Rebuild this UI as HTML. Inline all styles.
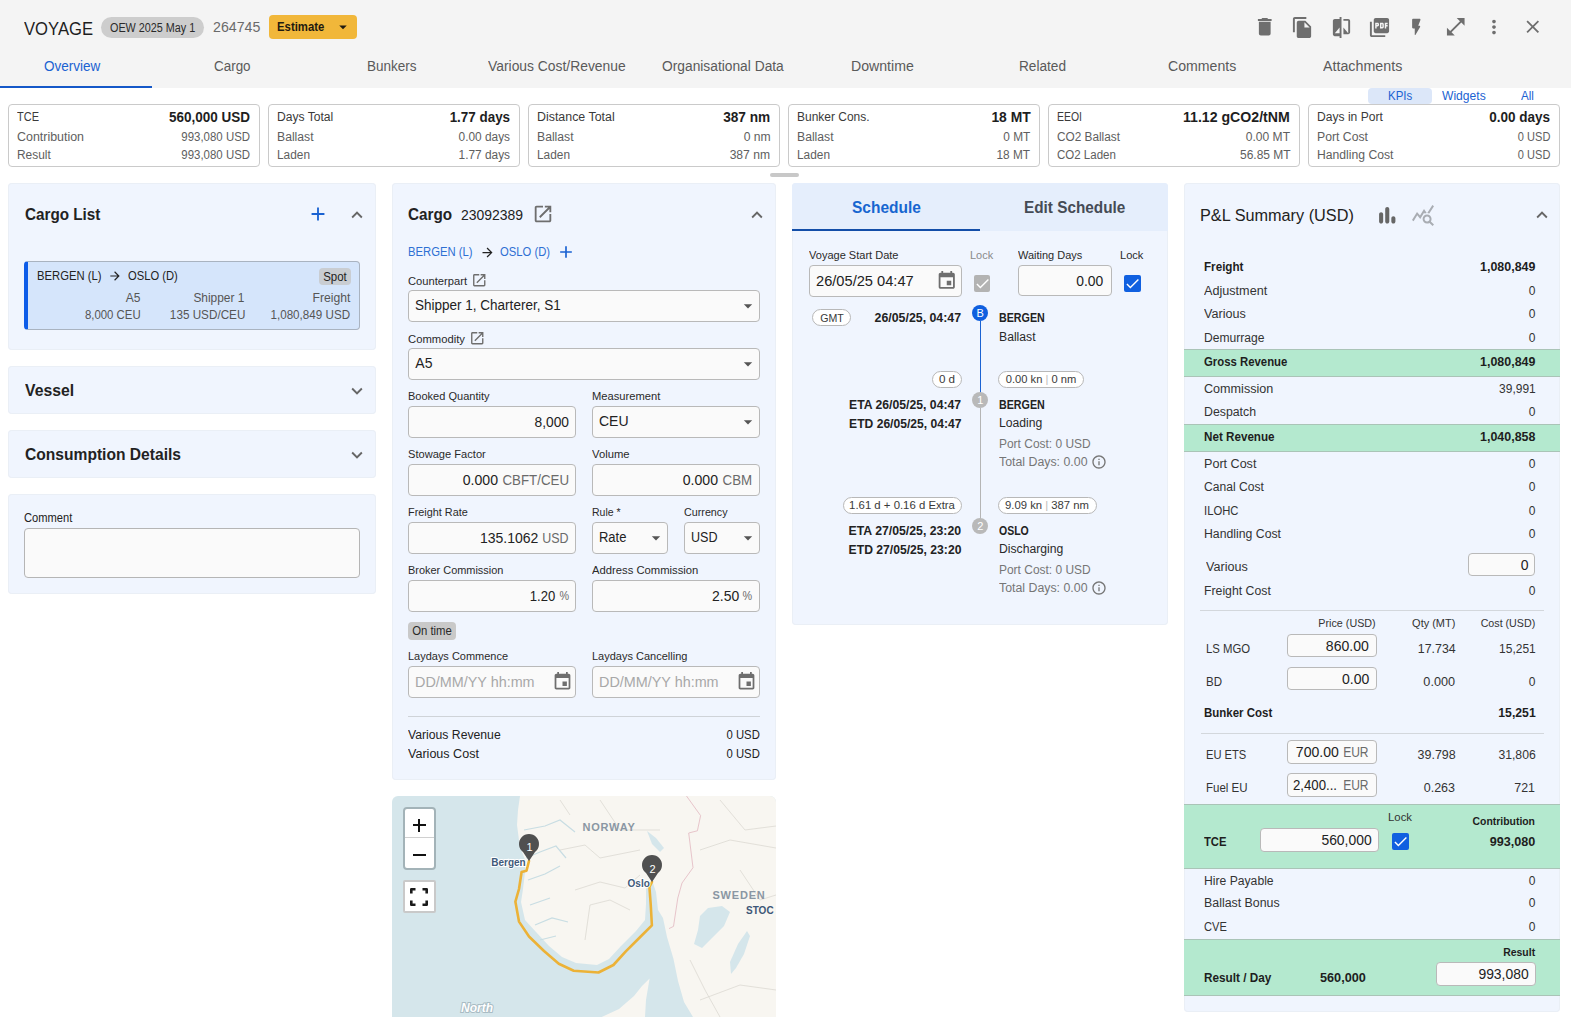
<!DOCTYPE html><html><head><meta charset="utf-8"><style>
*{margin:0;padding:0;box-sizing:border-box}
html,body{width:1571px;height:1017px;overflow:hidden;background:#fff;font-family:"Liberation Sans", sans-serif;position:relative}
.b{position:absolute}
.t{position:absolute;white-space:nowrap}
#t1{transform:scaleX(0.9237)}
#t2{transform:scaleX(0.9006)}
#t3{transform:scaleX(1.0124)}
#t4{transform:scaleX(0.8726)}
#t5{transform:scaleX(0.9647)}
#t6{transform:scaleX(0.9596)}
#t7{transform:scaleX(0.9657)}
#t8{transform:scaleX(0.9903)}
#t9{transform:scaleX(0.9842)}
#t10{transform:scaleX(1.0088)}
#t11{transform:scaleX(0.9738)}
#t12{transform:scaleX(1.0076)}
#t13{transform:scaleX(1.0189)}
#t14{transform:scaleX(0.9549)}
#t15{transform:scaleX(1.0079)}
#t16{transform:scaleX(0.9667)}
#t17{transform:scaleX(0.8800)}
#t18{transform:scaleX(0.9636)}
#t19{transform:scaleX(1.0352)}
#t20{transform:scaleX(0.9535)}
#t21{transform:scaleX(0.9937)}
#t22{transform:scaleX(0.9535)}
#t23{transform:scaleX(0.9683)}
#t24{transform:scaleX(0.9578)}
#t25{transform:scaleX(1.0158)}
#t26{transform:scaleX(0.9895)}
#t27{transform:scaleX(0.9888)}
#t28{transform:scaleX(0.9895)}
#t29{transform:scaleX(0.9924)}
#t30{transform:scaleX(0.9762)}
#t31{transform:scaleX(1.0158)}
#t32{transform:scaleX(1.0117)}
#t33{transform:scaleX(0.9888)}
#t34{transform:scaleX(1.0092)}
#t35{transform:scaleX(0.9573)}
#t36{transform:scaleX(0.9902)}
#t37{transform:scaleX(1.0158)}
#t38{transform:scaleX(0.9874)}
#t39{transform:scaleX(0.9888)}
#t40{transform:scaleX(0.9848)}
#t41{transform:scaleX(0.8335)}
#t42{transform:scaleX(1.0101)}
#t43{transform:scaleX(0.9839)}
#t44{transform:scaleX(1.0042)}
#t45{transform:scaleX(0.9594)}
#t46{transform:scaleX(0.9999)}
#t47{transform:scaleX(0.9663)}
#t48{transform:scaleX(0.9641)}
#t49{transform:scaleX(1.0197)}
#t50{transform:scaleX(0.9195)}
#t51{transform:scaleX(1.0149)}
#t52{transform:scaleX(0.9195)}
#t53{transform:scaleX(0.9517)}
#t54{transform:scaleX(0.8655)}
#t55{transform:scaleX(0.8616)}
#t56{transform:scaleX(0.9559)}
#t58{transform:scaleX(0.9505)}
#t59{transform:scaleX(0.9927)}
#t60{transform:scaleX(0.9758)}
#t61{transform:scaleX(1.0145)}
#t62{transform:scaleX(0.9700)}
#t63{transform:scaleX(0.9834)}
#t64{transform:scaleX(0.9749)}
#t65{transform:scaleX(0.9286)}
#t66{transform:scaleX(0.9517)}
#t67{transform:scaleX(0.9968)}
#t68{transform:scaleX(0.9015)}
#t69{transform:scaleX(0.8999)}
#t70{transform:scaleX(0.9714)}
#t71{transform:scaleX(0.9650)}
#t72{transform:scaleX(0.9784)}
#t74{transform:scaleX(0.9585)}
#t75{transform:scaleX(0.9714)}
#t76{transform:scaleX(0.9844)}
#t78{transform:scaleX(0.9659)}
#t79{transform:scaleX(0.9776)}
#t80{transform:scaleX(1.0072)}
#t81{transform:scaleX(0.9500)}
#t82{transform:scaleX(1.0072)}
#t83{transform:scaleX(0.9510)}
#t84{transform:scaleX(0.9450)}
#t85{transform:scaleX(0.9129)}
#t86{transform:scaleX(0.9345)}
#t87{transform:scaleX(0.9999)}
#t88{transform:scaleX(0.8896)}
#t89{transform:scaleX(0.9264)}
#t90{transform:scaleX(0.8964)}
#t91{transform:scaleX(0.9509)}
#t92{transform:scaleX(0.9783)}
#t93{transform:scaleX(0.9358)}
#t94{transform:scaleX(0.8629)}
#t95{transform:scaleX(0.9982)}
#t96{transform:scaleX(0.8629)}
#t97{transform:scaleX(0.9449)}
#t98{transform:scaleX(0.9539)}
#t99{transform:scaleX(0.9565)}
#t100{transform:scaleX(1.0272)}
#t101{transform:scaleX(1.0272)}
#t102{transform:scaleX(0.9761)}
#t103{transform:scaleX(1.0037)}
#t104{transform:scaleX(0.9042)}
#t105{transform:scaleX(0.9042)}
#t106{transform:scaleX(0.9671)}
#t107{transform:scaleX(0.9584)}
#t108{transform:scaleX(0.9588)}
#t109{transform:scaleX(0.9549)}
#t110{transform:scaleX(0.9550)}
#t111{transform:scaleX(0.9631)}
#t112{transform:scaleX(1.0458)}
#t113{transform:scaleX(0.9908)}
#t114{transform:scaleX(0.9232)}
#t115{transform:scaleX(1.0288)}
#t117{transform:scaleX(0.8920)}
#t118{transform:scaleX(1.0158)}
#t119{transform:scaleX(1.0125)}
#t120{transform:scaleX(0.9699)}
#t122{transform:scaleX(1.0175)}
#t123{transform:scaleX(1.0080)}
#t124{transform:scaleX(0.8920)}
#t125{transform:scaleX(1.0136)}
#t126{transform:scaleX(0.9964)}
#t127{transform:scaleX(1.0285)}
#t128{transform:scaleX(0.9879)}
#t129{transform:scaleX(0.9826)}
#t131{transform:scaleX(1.0220)}
#t132{transform:scaleX(1.0125)}
#t133{transform:scaleX(0.8761)}
#t134{transform:scaleX(1.0146)}
#t135{transform:scaleX(0.9964)}
#t136{transform:scaleX(1.0285)}
#t137{transform:scaleX(1.0156)}
#t138{transform:scaleX(0.9712)}
#t139{transform:scaleX(1.0358)}
#t140{transform:scaleX(1.0528)}
#t142{transform:scaleX(1.0478)}
#t144{transform:scaleX(1.0078)}
#t146{transform:scaleX(0.9472)}
#t147{transform:scaleX(1.0358)}
#t148{transform:scaleX(1.0498)}
#t149{transform:scaleX(0.9972)}
#t150{transform:scaleX(1.0256)}
#t152{transform:scaleX(0.9711)}
#t153{transform:scaleX(1.0358)}
#t154{transform:scaleX(1.0477)}
#t156{transform:scaleX(1.0072)}
#t158{transform:scaleX(0.9376)}
#t160{transform:scaleX(1.0216)}
#t162{transform:scaleX(1.0478)}
#t164{transform:scaleX(1.0220)}
#t166{transform:scaleX(0.9766)}
#t167{transform:scaleX(0.9979)}
#t168{transform:scaleX(0.9709)}
#t169{transform:scaleX(0.9467)}
#t170{transform:scaleX(1.0040)}
#t171{transform:scaleX(1.0326)}
#t172{transform:scaleX(0.9972)}
#t173{transform:scaleX(0.9597)}
#t174{transform:scaleX(1.0018)}
#t175{transform:scaleX(1.0556)}
#t177{transform:scaleX(0.9573)}
#t178{transform:scaleX(1.0190)}
#t179{transform:scaleX(0.9298)}
#t180{transform:scaleX(1.0040)}
#t181{transform:scaleX(0.8592)}
#t182{transform:scaleX(1.0381)}
#t183{transform:scaleX(1.0163)}
#t184{transform:scaleX(0.9594)}
#t185{transform:scaleX(0.9421)}
#t186{transform:scaleX(0.8592)}
#t187{transform:scaleX(1.0422)}
#t188{transform:scaleX(1.0334)}
#t189{transform:scaleX(0.9375)}
#t190{transform:scaleX(0.9919)}
#t191{transform:scaleX(0.9878)}
#t192{transform:scaleX(0.9046)}
#t193{transform:scaleX(1.0509)}
#t194{transform:scaleX(1.0131)}
#t196{transform:scaleX(1.0315)}
#t198{transform:scaleX(0.9235)}
#t200{transform:scaleX(0.9102)}
#t201{transform:scaleX(0.9796)}
#t202{transform:scaleX(1.0578)}
#t203{transform:scaleX(0.9919)}</style></head><body>
<div class="b" style="left:0px;top:0px;width:1571px;height:88px;background:#f4f4f4"></div>
<div class="t" id="t1" style="left:24px;top:18.5px;font-size:18px;line-height:20px;color:#1e1e1e;transform-origin:left;">VOYAGE</div>
<div class="b" style="left:101px;top:17px;width:103px;height:21px;background:#cdcdcd;border-radius:11px"></div>
<div class="t" id="t2" style="left:109.5px;top:17.5px;font-size:12px;line-height:20px;color:#2a2a2a;transform-origin:left;">OEW 2025 May 1</div>
<div class="t" id="t3" style="left:212.5px;top:17.0px;font-size:14px;line-height:20px;color:#6a6a6a;transform-origin:left;">264745</div>
<div class="b" style="left:269px;top:15px;width:88px;height:24px;background:#f1b73a;border-radius:4px"></div>
<div class="t" id="t4" style="left:276.7px;top:17.0px;font-size:13px;line-height:20px;color:#1f1a10;font-weight:700;transform-origin:left;">Estimate</div>
<svg class="b" style="left:334.0px;top:18.0px;" width="18" height="18" viewBox="0 0 24 24"><path fill="#1f1a10" d="M7 10l5 5 5-5z"/></svg>
<svg class="b" style="left:1252.75px;top:15.25px;" width="23.5" height="23.5" viewBox="0 0 24 24"><path fill="#6e6e6e" d="M6 19c0 1.1.9 2 2 2h8c1.1 0 2-.9 2-2V7H6v12zM19 4h-3.5l-1-1h-5l-1 1H5v2h14V4z"/></svg>
<svg class="b" style="left:1290.5px;top:15.5px;" width="23" height="23" viewBox="0 0 24 24"><path fill="#6e6e6e" d="M16 1H4c-1.1 0-2 .9-2 2v14h2V3h12V1zm-1 4l6 6v10c0 1.1-.9 2-2 2H7.99C6.89 23 6 22.1 6 21l.01-14c0-1.1.89-2 1.99-2h7zm-1 7h5.5L14 6.5V12z"/></svg>
<svg class="b" style="left:1329.7px;top:15.5px;" width="23" height="23" viewBox="0 0 24 24"><path fill="#6e6e6e" d="M10 3H5c-1.11 0-2 .89-2 2v14c0 1.1.89 2 2 2h5v2h2V1h-2v2zm0 15H5l5-6v6zm9-15h-5v2h5v13l-5-6v7h5c1.1 0 2-.9 2-2V5c0-1.11-.9-2-2-2z"/></svg>
<svg class="b" style="left:1367.8px;top:15.5px;" width="23" height="23" viewBox="0 0 24 24"><path fill="#6e6e6e" d="M20 2H8c-1.1 0-2 .9-2 2v12c0 1.1.9 2 2 2h12c1.1 0 2-.9 2-2V4c0-1.1-.9-2-2-2zm-8.5 7.5c0 .83-.67 1.5-1.5 1.5H9v2H7.5V7H10c.83 0 1.5.67 1.5 1.5v1zm5 2c0 .83-.67 1.5-1.5 1.5h-2.5V7H15c.83 0 1.5.67 1.5 1.5v3zm4-3H19v1h1.5V11H19v2h-1.5V7h3v1.5zM9 9.5h1v-1H9v1zM4 6H2v14c0 1.1.9 2 2 2h14v-2H4V6zm10 5.5h1v-3h-1v3z"/></svg>
<svg class="b" style="left:1406.0px;top:16.5px;" width="21" height="21" viewBox="0 0 24 24"><path fill="#6e6e6e" d="M7 3v9c0 .55.45 1 1 1h2v7.15c0 .51.67.69.93.25l5.19-8.9c.39-.67-.09-1.5-.86-1.5H14l2.49-6.65c.25-.65-.23-1.35-.93-1.35H8c-.55 0-1 .45-1 1z"/></svg>
<svg class="b" style="left:1444.45px;top:15.25px;" width="23.5" height="23.5" viewBox="0 0 24 24"><path fill="#6e6e6e" d="M21 11V3h-8l3.29 3.29-10 10L3 13v8h8l-3.29-3.29 10-10z"/></svg>
<svg class="b" style="left:1483.0px;top:16.0px;" width="22" height="22" viewBox="0 0 24 24"><path fill="#6e6e6e" d="M12 8c1.1 0 2-.9 2-2s-.9-2-2-2-2 .9-2 2 .9 2 2 2zm0 2c-1.1 0-2 .9-2 2s.9 2 2 2 2-.9 2-2-.9-2-2-2zm0 6c-1.1 0-2 .9-2 2s.9 2 2 2 2-.9 2-2-.9-2-2-2z"/></svg>
<svg class="b" style="left:1522.45px;top:16.25px;" width="21.5" height="21.5" viewBox="0 0 24 24"><path fill="#6e6e6e" d="M19 6.41L17.59 5 12 10.59 6.41 5 5 6.41 10.59 12 5 17.59 6.41 19 12 13.41 17.59 19 19 17.59 13.41 12z"/></svg>
<div class="t" id="t5" style="left:44px;top:56.0px;font-size:14px;line-height:20px;color:#1a62d2;transform-origin:left;">Overview</div>
<div class="t" id="t6" style="left:213.9px;top:56.0px;font-size:14px;line-height:20px;color:#5a5a5a;transform-origin:left;">Cargo</div>
<div class="t" id="t7" style="left:367px;top:56.0px;font-size:14px;line-height:20px;color:#5a5a5a;transform-origin:left;">Bunkers</div>
<div class="t" id="t8" style="left:488.3px;top:56.0px;font-size:14px;line-height:20px;color:#5a5a5a;transform-origin:left;">Various Cost/Revenue</div>
<div class="t" id="t9" style="left:661.6px;top:56.0px;font-size:14px;line-height:20px;color:#5a5a5a;transform-origin:left;">Organisational Data</div>
<div class="t" id="t10" style="left:851px;top:56.0px;font-size:14px;line-height:20px;color:#5a5a5a;transform-origin:left;">Downtime</div>
<div class="t" id="t11" style="left:1019px;top:56.0px;font-size:14px;line-height:20px;color:#5a5a5a;transform-origin:left;">Related</div>
<div class="t" id="t12" style="left:1167.8px;top:56.0px;font-size:14px;line-height:20px;color:#5a5a5a;transform-origin:left;">Comments</div>
<div class="t" id="t13" style="left:1322.5px;top:56.0px;font-size:14px;line-height:20px;color:#5a5a5a;transform-origin:left;">Attachments</div>
<div class="b" style="left:0px;top:86px;width:152px;height:2px;background:#1558c8"></div>
<div class="b" style="left:1368px;top:88px;width:64px;height:15.5px;background:#dce7f9;border-radius:4px"></div>
<div class="t" id="t14" style="left:1387.7px;top:85.5px;font-size:12px;line-height:20px;color:#1a62d2;transform-origin:left;">KPIs</div>
<div class="t" id="t15" style="left:1442px;top:85.5px;font-size:12px;line-height:20px;color:#1a62d2;transform-origin:left;">Widgets</div>
<div class="t" id="t16" style="left:1521.3px;top:85.5px;font-size:12px;line-height:20px;color:#1a62d2;transform-origin:left;">All</div>
<div class="b" style="left:8px;top:104px;width:252px;height:62.5px;border:1px solid #cacaca;border-radius:4px"></div>
<div class="t" id="t17" style="left:17.3px;top:107.0px;font-size:12.5px;line-height:20px;color:#3a3a3a;transform-origin:left;">TCE</div>
<div class="t" id="t18" style="right:1320.8px;top:107.0px;font-size:14px;line-height:20px;color:#1e1e1e;font-weight:700;transform-origin:right;">560,000 USD</div>
<div class="t" id="t19" style="left:17.3px;top:127.0px;font-size:12px;line-height:20px;color:#5e5e5e;transform-origin:left;">Contribution</div>
<div class="t" id="t20" style="right:1320.8px;top:127.0px;font-size:12px;line-height:20px;color:#5e5e5e;transform-origin:right;">993,080 USD</div>
<div class="t" id="t21" style="left:17.3px;top:145.0px;font-size:12px;line-height:20px;color:#5e5e5e;transform-origin:left;">Result</div>
<div class="t" id="t22" style="right:1320.8px;top:145.0px;font-size:12px;line-height:20px;color:#5e5e5e;transform-origin:right;">993,080 USD</div>
<div class="b" style="left:268px;top:104px;width:252px;height:62.5px;border:1px solid #cacaca;border-radius:4px"></div>
<div class="t" id="t23" style="left:277.3px;top:107.0px;font-size:12.5px;line-height:20px;color:#3a3a3a;transform-origin:left;">Days Total</div>
<div class="t" id="t24" style="right:1060.8px;top:107.0px;font-size:14px;line-height:20px;color:#1e1e1e;font-weight:700;transform-origin:right;">1.77 days</div>
<div class="t" id="t25" style="left:277.3px;top:127.0px;font-size:12px;line-height:20px;color:#5e5e5e;transform-origin:left;">Ballast</div>
<div class="t" id="t26" style="right:1060.8px;top:127.0px;font-size:12px;line-height:20px;color:#5e5e5e;transform-origin:right;">0.00 days</div>
<div class="t" id="t27" style="left:277.3px;top:145.0px;font-size:12px;line-height:20px;color:#5e5e5e;transform-origin:left;">Laden</div>
<div class="t" id="t28" style="right:1060.8px;top:145.0px;font-size:12px;line-height:20px;color:#5e5e5e;transform-origin:right;">1.77 days</div>
<div class="b" style="left:528px;top:104px;width:252px;height:62.5px;border:1px solid #cacaca;border-radius:4px"></div>
<div class="t" id="t29" style="left:537.3px;top:107.0px;font-size:12.5px;line-height:20px;color:#3a3a3a;transform-origin:left;">Distance Total</div>
<div class="t" id="t30" style="right:800.8px;top:107.0px;font-size:14px;line-height:20px;color:#1e1e1e;font-weight:700;transform-origin:right;">387 nm</div>
<div class="t" id="t31" style="left:537.3px;top:127.0px;font-size:12px;line-height:20px;color:#5e5e5e;transform-origin:left;">Ballast</div>
<div class="t" id="t32" style="right:800.8px;top:127.0px;font-size:12px;line-height:20px;color:#5e5e5e;transform-origin:right;">0 nm</div>
<div class="t" id="t33" style="left:537.3px;top:145.0px;font-size:12px;line-height:20px;color:#5e5e5e;transform-origin:left;">Laden</div>
<div class="t" id="t34" style="right:800.8px;top:145.0px;font-size:12px;line-height:20px;color:#5e5e5e;transform-origin:right;">387 nm</div>
<div class="b" style="left:788px;top:104px;width:252px;height:62.5px;border:1px solid #cacaca;border-radius:4px"></div>
<div class="t" id="t35" style="left:797.3px;top:107.0px;font-size:12.5px;line-height:20px;color:#3a3a3a;transform-origin:left;">Bunker Cons.</div>
<div class="t" id="t36" style="right:540.8px;top:107.0px;font-size:14px;line-height:20px;color:#1e1e1e;font-weight:700;transform-origin:right;">18 MT</div>
<div class="t" id="t37" style="left:797.3px;top:127.0px;font-size:12px;line-height:20px;color:#5e5e5e;transform-origin:left;">Ballast</div>
<div class="t" id="t38" style="right:540.8px;top:127.0px;font-size:12px;line-height:20px;color:#5e5e5e;transform-origin:right;">0 MT</div>
<div class="t" id="t39" style="left:797.3px;top:145.0px;font-size:12px;line-height:20px;color:#5e5e5e;transform-origin:left;">Laden</div>
<div class="t" id="t40" style="right:540.8px;top:145.0px;font-size:12px;line-height:20px;color:#5e5e5e;transform-origin:right;">18 MT</div>
<div class="b" style="left:1048px;top:104px;width:252px;height:62.5px;border:1px solid #cacaca;border-radius:4px"></div>
<div class="t" id="t41" style="left:1057.3px;top:107.0px;font-size:12.5px;line-height:20px;color:#3a3a3a;transform-origin:left;">EEOI</div>
<div class="t" id="t42" style="right:280.79999999999995px;top:107.0px;font-size:14px;line-height:20px;color:#1e1e1e;font-weight:700;transform-origin:right;">11.12 gCO2/tNM</div>
<div class="t" id="t43" style="left:1057.3px;top:127.0px;font-size:12px;line-height:20px;color:#5e5e5e;transform-origin:left;">CO2 Ballast</div>
<div class="t" id="t44" style="right:280.79999999999995px;top:127.0px;font-size:12px;line-height:20px;color:#5e5e5e;transform-origin:right;">0.00 MT</div>
<div class="t" id="t45" style="left:1057.3px;top:145.0px;font-size:12px;line-height:20px;color:#5e5e5e;transform-origin:left;">CO2 Laden</div>
<div class="t" id="t46" style="right:280.79999999999995px;top:145.0px;font-size:12px;line-height:20px;color:#5e5e5e;transform-origin:right;">56.85 MT</div>
<div class="b" style="left:1308px;top:104px;width:252px;height:62.5px;border:1px solid #cacaca;border-radius:4px"></div>
<div class="t" id="t47" style="left:1317.3px;top:107.0px;font-size:12.5px;line-height:20px;color:#3a3a3a;transform-origin:left;">Days in Port</div>
<div class="t" id="t48" style="right:20.799999999999955px;top:107.0px;font-size:14px;line-height:20px;color:#1e1e1e;font-weight:700;transform-origin:right;">0.00 days</div>
<div class="t" id="t49" style="left:1317.3px;top:127.0px;font-size:12px;line-height:20px;color:#5e5e5e;transform-origin:left;">Port Cost</div>
<div class="t" id="t50" style="right:20.799999999999955px;top:127.0px;font-size:12px;line-height:20px;color:#5e5e5e;transform-origin:right;">0 USD</div>
<div class="t" id="t51" style="left:1317.3px;top:145.0px;font-size:12px;line-height:20px;color:#5e5e5e;transform-origin:left;">Handling Cost</div>
<div class="t" id="t52" style="right:20.799999999999955px;top:145.0px;font-size:12px;line-height:20px;color:#5e5e5e;transform-origin:right;">0 USD</div>
<div class="b" style="left:769.5px;top:173px;width:29.5px;height:4px;background:#c8c8c8;border-radius:2px"></div>
<div class="b" style="left:8px;top:183px;width:368px;height:166.5px;background:#f0f5fe;border-radius:4px;box-shadow:inset 0 0 0 1px #eaeff6;"></div>
<div class="t" id="t53" style="left:24.5px;top:205.2px;font-size:16px;line-height:20px;color:#222;font-weight:700;transform-origin:left;">Cargo List</div>
<svg class="b" style="left:307.3px;top:203.2px;" width="22" height="22" viewBox="0 0 24 24"><path fill="#1a62d2" d="M19 13h-6v6h-2v-6H5v-2h6V5h2v6h6v2z"/></svg>
<svg class="b" style="left:346.2px;top:203.8px;" width="22" height="22" viewBox="0 0 24 24"><path fill="#666" d="M12 8l-6 6 1.41 1.41L12 10.83l4.59 4.58L18 14z"/></svg>
<div class="b" style="left:24px;top:261px;width:336px;height:69px;background:#d5e5fb;border:1px solid #a9b3c0;border-left:4px solid #0d5ce8;border-radius:4px"></div>
<div class="t" id="t54" style="left:36.6px;top:265.5px;font-size:13px;line-height:20px;color:#222;transform-origin:left;">BERGEN (L)</div>
<svg class="b" style="left:108.2px;top:268.5px;" width="14" height="14" viewBox="0 0 24 24"><path fill="#222" d="M12 4l-1.41 1.41L16.17 11H4v2h12.17l-5.58 5.59L12 20l8-8z"/></svg>
<div class="t" id="t55" style="left:128.2px;top:265.5px;font-size:13px;line-height:20px;color:#222;transform-origin:left;">OSLO (D)</div>
<div class="b" style="left:319px;top:268.3px;width:31.5px;height:17.2px;background:#c9cdd2;border-radius:4px"></div>
<div class="t" id="t56" style="left:34.69999999999999px;width:600px;text-align:center;top:267.0px;font-size:12px;line-height:20px;color:#222;transform-origin:center;">Spot</div>
<div class="t" id="t57" style="right:1430.5px;top:287.5px;font-size:12px;line-height:20px;color:#555;transform-origin:right;">A5</div>
<div class="t" id="t58" style="right:1430.5px;top:304.5px;font-size:12px;line-height:20px;color:#555;transform-origin:right;">8,000 CEU</div>
<div class="t" id="t59" style="right:1326.3px;top:287.5px;font-size:12px;line-height:20px;color:#555;transform-origin:right;">Shipper 1</div>
<div class="t" id="t60" style="right:1325.7px;top:304.5px;font-size:12px;line-height:20px;color:#555;transform-origin:right;">135 USD/CEU</div>
<div class="t" id="t61" style="right:1220.7px;top:287.5px;font-size:12px;line-height:20px;color:#555;transform-origin:right;">Freight</div>
<div class="t" id="t62" style="right:1220.7px;top:304.5px;font-size:12px;line-height:20px;color:#555;transform-origin:right;">1,080,849 USD</div>
<div class="b" style="left:8px;top:366px;width:368px;height:47.5px;background:#f0f5fe;border-radius:4px;box-shadow:inset 0 0 0 1px #eaeff6;"></div>
<div class="t" id="t63" style="left:24.5px;top:381.0px;font-size:16px;line-height:20px;color:#222;font-weight:700;transform-origin:left;">Vessel</div>
<svg class="b" style="left:346.2px;top:379.5px;" width="22" height="22" viewBox="0 0 24 24"><path fill="#666" d="M16.59 8.59L12 13.17 7.41 8.59 6 10l6 6 6-6z"/></svg>
<div class="b" style="left:8px;top:430px;width:368px;height:47.5px;background:#f0f5fe;border-radius:4px;box-shadow:inset 0 0 0 1px #eaeff6;"></div>
<div class="t" id="t64" style="left:24.5px;top:444.5px;font-size:16px;line-height:20px;color:#222;font-weight:700;transform-origin:left;">Consumption Details</div>
<svg class="b" style="left:346.2px;top:443.5px;" width="22" height="22" viewBox="0 0 24 24"><path fill="#666" d="M16.59 8.59L12 13.17 7.41 8.59 6 10l6 6 6-6z"/></svg>
<div class="b" style="left:8px;top:494px;width:368px;height:99.5px;background:#f0f5fe;border-radius:4px;box-shadow:inset 0 0 0 1px #eaeff6;"></div>
<div class="t" id="t65" style="left:24.3px;top:508.0px;font-size:12px;line-height:20px;color:#222;transform-origin:left;">Comment</div>
<div class="b" style="left:24px;top:528px;width:336px;height:49.5px;background:#fafafa;border:1px solid #b5b5b5;border-radius:4px"></div>
<div class="b" style="left:392px;top:183px;width:384px;height:597px;background:#f0f5fe;border-radius:4px;box-shadow:inset 0 0 0 1px #eaeff6;"></div>
<div class="t" id="t66" style="left:408.4px;top:205.2px;font-size:16px;line-height:20px;color:#222;font-weight:700;transform-origin:left;">Cargo</div>
<div class="t" id="t67" style="left:461.2px;top:204.8px;font-size:14px;line-height:20px;color:#222;transform-origin:left;">23092389</div>
<svg class="b" style="left:532.3px;top:203.2px;" width="22" height="22" viewBox="0 0 24 24"><path fill="#6e6e6e" d="M19 19H5V5h7V3H5c-1.11 0-2 .9-2 2v14c0 1.1.89 2 2 2h14c1.1 0 2-.9 2-2v-7h-2v7zM14 3v2h3.59l-9.83 9.83 1.41 1.41L19 6.41V10h2V3h-7z"/></svg>
<svg class="b" style="left:745.8px;top:203.5px;" width="22" height="22" viewBox="0 0 24 24"><path fill="#666" d="M12 8l-6 6 1.41 1.41L12 10.83l4.59 4.58L18 14z"/></svg>
<div class="t" id="t68" style="left:408.4px;top:241.8px;font-size:12.5px;line-height:20px;color:#2e6fd3;transform-origin:left;">BERGEN (L)</div>
<svg class="b" style="left:479.5px;top:244.5px;" width="15" height="15" viewBox="0 0 24 24"><path fill="#222" d="M12 4l-1.41 1.41L16.17 11H4v2h12.17l-5.58 5.59L12 20l8-8z"/></svg>
<div class="t" id="t69" style="left:500px;top:241.8px;font-size:12.5px;line-height:20px;color:#2e6fd3;transform-origin:left;">OSLO (D)</div>
<svg class="b" style="left:556.3px;top:242.0px;" width="20" height="20" viewBox="0 0 24 24"><path fill="#1a62d2" d="M19 13h-6v6h-2v-6H5v-2h6V5h2v6h6v2z"/></svg>
<div class="t" id="t70" style="left:408.4px;top:271.0px;font-size:11.5px;line-height:20px;color:#2a2a2a;transform-origin:left;">Counterpart</div>
<svg class="b" style="left:471.35px;top:272.35px;" width="16.5" height="16.5" viewBox="0 0 24 24"><path fill="#6e6e6e" d="M19 19H5V5h7V3H5c-1.11 0-2 .9-2 2v14c0 1.1.89 2 2 2h14c1.1 0 2-.9 2-2v-7h-2v7zM14 3v2h3.59l-9.83 9.83 1.41 1.41L19 6.41V10h2V3h-7z"/></svg>
<div class="b" style="left:408px;top:290px;width:352px;height:32px;background:#fafafa;border:1px solid #b9b9b9;border-radius:4px;"></div>
<div class="t" id="t71" style="left:415.3px;top:295.0px;font-size:14px;line-height:20px;color:#222;transform-origin:left;">Shipper 1, Charterer, S1</div>
<svg class="b" style="left:737.5px;top:295.5px;" width="20" height="20" viewBox="0 0 24 24"><path fill="#555" d="M7 10l5 5 5-5z"/></svg>
<div class="t" id="t72" style="left:408.4px;top:329.0px;font-size:11.5px;line-height:20px;color:#2a2a2a;transform-origin:left;">Commodity</div>
<svg class="b" style="left:468.75px;top:330.25px;" width="16.5" height="16.5" viewBox="0 0 24 24"><path fill="#6e6e6e" d="M19 19H5V5h7V3H5c-1.11 0-2 .9-2 2v14c0 1.1.89 2 2 2h14c1.1 0 2-.9 2-2v-7h-2v7zM14 3v2h3.59l-9.83 9.83 1.41 1.41L19 6.41V10h2V3h-7z"/></svg>
<div class="b" style="left:408px;top:348px;width:352px;height:32px;background:#fafafa;border:1px solid #b9b9b9;border-radius:4px;"></div>
<div class="t" id="t73" style="left:415.3px;top:353.2px;font-size:14px;line-height:20px;color:#222;transform-origin:left;">A5</div>
<svg class="b" style="left:737.5px;top:353.5px;" width="20" height="20" viewBox="0 0 24 24"><path fill="#555" d="M7 10l5 5 5-5z"/></svg>
<div class="t" id="t74" style="left:408.4px;top:386.2px;font-size:11.5px;line-height:20px;color:#2a2a2a;transform-origin:left;">Booked Quantity</div>
<div class="t" id="t75" style="left:592px;top:386.2px;font-size:11.5px;line-height:20px;color:#2a2a2a;transform-origin:left;">Measurement</div>
<div class="b" style="left:408px;top:406px;width:168px;height:32px;background:#fafafa;border:1px solid #b9b9b9;border-radius:4px;"></div>
<div class="b" style="left:592px;top:406px;width:168px;height:32px;background:#fafafa;border:1px solid #b9b9b9;border-radius:4px;"></div>
<div class="t" id="t76" style="right:1002px;top:412.0px;font-size:14px;line-height:20px;color:#222;transform-origin:right;">8,000</div>
<div class="t" id="t77" style="left:599px;top:411.2px;font-size:14px;line-height:20px;color:#222;transform-origin:left;">CEU</div>
<svg class="b" style="left:737.5px;top:411.7px;" width="20" height="20" viewBox="0 0 24 24"><path fill="#555" d="M7 10l5 5 5-5z"/></svg>
<div class="t" id="t78" style="left:408.4px;top:444.2px;font-size:11.5px;line-height:20px;color:#2a2a2a;transform-origin:left;">Stowage Factor</div>
<div class="t" id="t79" style="left:592px;top:444.2px;font-size:11.5px;line-height:20px;color:#2a2a2a;transform-origin:left;">Volume</div>
<div class="b" style="left:408px;top:464px;width:168px;height:32px;background:#fafafa;border:1px solid #b9b9b9;border-radius:4px;"></div>
<div class="b" style="left:592px;top:464px;width:168px;height:32px;background:#fafafa;border:1px solid #b9b9b9;border-radius:4px;"></div>
<div class="t" id="t80" style="right:1072.5px;top:470.0px;font-size:14px;line-height:20px;color:#222;transform-origin:right;">0.000</div>
<div class="t" id="t81" style="right:1002px;top:470.0px;font-size:14px;line-height:20px;color:#6a6a6a;transform-origin:right;">CBFT/CEU</div>
<div class="t" id="t82" style="right:853px;top:470.0px;font-size:14px;line-height:20px;color:#222;transform-origin:right;">0.000</div>
<div class="t" id="t83" style="right:818.5px;top:470.0px;font-size:14px;line-height:20px;color:#6a6a6a;transform-origin:right;">CBM</div>
<div class="t" id="t84" style="left:408.4px;top:502.20000000000005px;font-size:11.5px;line-height:20px;color:#2a2a2a;transform-origin:left;">Freight Rate</div>
<div class="t" id="t85" style="left:592px;top:502.20000000000005px;font-size:11.5px;line-height:20px;color:#2a2a2a;transform-origin:left;">Rule *</div>
<div class="t" id="t86" style="left:684.2px;top:502.20000000000005px;font-size:11.5px;line-height:20px;color:#2a2a2a;transform-origin:left;">Currency</div>
<div class="b" style="left:408px;top:522px;width:168px;height:32px;background:#fafafa;border:1px solid #b9b9b9;border-radius:4px;"></div>
<div class="b" style="left:592px;top:522px;width:76px;height:32px;background:#fafafa;border:1px solid #b9b9b9;border-radius:4px;"></div>
<div class="b" style="left:684px;top:522px;width:76px;height:32px;background:#fafafa;border:1px solid #b9b9b9;border-radius:4px;"></div>
<div class="t" id="t87" style="right:1032.4px;top:528.0px;font-size:14px;line-height:20px;color:#222;transform-origin:right;">135.1062</div>
<div class="t" id="t88" style="right:1002px;top:528.0px;font-size:14px;line-height:20px;color:#6a6a6a;transform-origin:right;">USD</div>
<div class="t" id="t89" style="left:599px;top:527.2px;font-size:14px;line-height:20px;color:#222;transform-origin:left;">Rate</div>
<svg class="b" style="left:645.5px;top:527.7px;" width="20" height="20" viewBox="0 0 24 24"><path fill="#555" d="M7 10l5 5 5-5z"/></svg>
<div class="t" id="t90" style="left:691px;top:527.2px;font-size:14px;line-height:20px;color:#222;transform-origin:left;">USD</div>
<svg class="b" style="left:737.5px;top:527.7px;" width="20" height="20" viewBox="0 0 24 24"><path fill="#555" d="M7 10l5 5 5-5z"/></svg>
<div class="t" id="t91" style="left:408.4px;top:560.2px;font-size:11.5px;line-height:20px;color:#2a2a2a;transform-origin:left;">Broker Commission</div>
<div class="t" id="t92" style="left:592px;top:560.2px;font-size:11.5px;line-height:20px;color:#2a2a2a;transform-origin:left;">Address Commission</div>
<div class="b" style="left:408px;top:580px;width:168px;height:32px;background:#fafafa;border:1px solid #b9b9b9;border-radius:4px;"></div>
<div class="b" style="left:592px;top:580px;width:168px;height:32px;background:#fafafa;border:1px solid #b9b9b9;border-radius:4px;"></div>
<div class="t" id="t93" style="right:1016px;top:586.0px;font-size:14px;line-height:20px;color:#222;transform-origin:right;">1.20</div>
<div class="t" id="t94" style="right:1002px;top:586.0px;font-size:12.5px;line-height:20px;color:#6a6a6a;transform-origin:right;">%</div>
<div class="t" id="t95" style="right:832px;top:586.0px;font-size:14px;line-height:20px;color:#222;transform-origin:right;">2.50</div>
<div class="t" id="t96" style="right:818.5px;top:586.0px;font-size:12.5px;line-height:20px;color:#6a6a6a;transform-origin:right;">%</div>
<div class="b" style="left:408px;top:622px;width:47.7px;height:17.7px;background:#c9c9c9;border-radius:4px"></div>
<div class="t" id="t97" style="left:131.8px;width:600px;text-align:center;top:621.0px;font-size:12px;line-height:20px;color:#2a2a2a;transform-origin:center;">On time</div>
<div class="t" id="t98" style="left:408.4px;top:646.3px;font-size:11.5px;line-height:20px;color:#2a2a2a;transform-origin:left;">Laydays Commence</div>
<div class="t" id="t99" style="left:592px;top:646.3px;font-size:11.5px;line-height:20px;color:#2a2a2a;transform-origin:left;">Laydays Cancelling</div>
<div class="b" style="left:408px;top:666px;width:168px;height:32px;background:#fafafa;border:1px solid #b9b9b9;border-radius:4px;"></div>
<div class="b" style="left:592px;top:666px;width:168px;height:32px;background:#fafafa;border:1px solid #b9b9b9;border-radius:4px;"></div>
<div class="t" id="t100" style="left:414.5px;top:672.0px;font-size:14px;line-height:20px;color:#a8a8a8;transform-origin:left;">DD/MM/YY hh:mm</div>
<div class="t" id="t101" style="left:598.5px;top:672.0px;font-size:14px;line-height:20px;color:#a8a8a8;transform-origin:left;">DD/MM/YY hh:mm</div>
<svg class="b" style="left:551.5px;top:670.8px;" width="21" height="21" viewBox="0 0 24 24"><path fill="#6e6e6e" d="M17 12h-5v5h5v-5zM16 1v2H8V1H6v2H5c-1.11 0-1.99.9-1.99 2L3 19c0 1.1.89 2 2 2h14c1.1 0 2-.9 2-2V5c0-1.1-.9-2-2-2h-1V1h-2zm3 18H5V8h14v11z"/></svg>
<svg class="b" style="left:735.5px;top:670.8px;" width="21" height="21" viewBox="0 0 24 24"><path fill="#6e6e6e" d="M17 12h-5v5h5v-5zM16 1v2H8V1H6v2H5c-1.11 0-1.99.9-1.99 2L3 19c0 1.1.89 2 2 2h14c1.1 0 2-.9 2-2V5c0-1.1-.9-2-2-2h-1V1h-2zm3 18H5V8h14v11z"/></svg>
<div class="b" style="left:408px;top:716px;width:352px;height:1px;background:#cfd3d8"></div>
<div class="t" id="t102" style="left:408.4px;top:724.7px;font-size:12.5px;line-height:20px;color:#222;transform-origin:left;">Various Revenue</div>
<div class="t" id="t103" style="left:408.4px;top:743.7px;font-size:12.5px;line-height:20px;color:#222;transform-origin:left;">Various Cost</div>
<div class="t" id="t104" style="right:811.3px;top:724.7px;font-size:12.5px;line-height:20px;color:#222;transform-origin:right;">0 USD</div>
<div class="t" id="t105" style="right:811.3px;top:743.7px;font-size:12.5px;line-height:20px;color:#222;transform-origin:right;">0 USD</div>

<svg class="b" style="left:392px;top:796px" width="384" height="221" viewBox="392 796 384 221">
 <defs><clipPath id="mc"><rect x="392" y="796" width="384" height="240" rx="6"/></clipPath></defs>
 <g clip-path="url(#mc)">
 <rect x="392" y="796" width="384" height="221" fill="#d5e6eb"/>
 <path fill="#f8f6f1" d="M520 796 L518 810 L517 825 L519 840 L522 852 L526 862 L525 872 L523 889 L521 902 L525 920 L536 932 L549 946 L562 957 L576 963 L597 965 L609 959 L621 946 L636 931 L645 920 L646 904 L646 889 L652 880 L656 892 L658 910 L663 918 L667 937 L673.5 959 L678 981 L684 1002 L693 1017 L776 1017 L776 796 Z"/>
 <path fill="#f8f6f1" d="M649.6 978.6 L642 986 L634 996 L619 1009 L601.7 1017 L645 1017 L646 1000 Z"/>
 <path fill="#d5e6eb" d="M700 916 L708 908 L722 906 L730 912 L724 926 L712 938 L702 948 L694 944 L698 930 Z"/>
 <path fill="#d5e6eb" d="M747 931 L750 936 L744 954 L736 968 L731 974 L730 962 L738 944 Z"/>
 <path fill="#d5e6eb" d="M647 831 L656 838 L664 848 L660 852 L652 844 Z"/>
 <path fill="none" stroke="#c8dde3" stroke-width="1.2" d="M524 830 L545 826 L560 820 L575 832 M526 858 L540 852 L556 846 L566 858 M528 880 L545 874 L560 866 M530 905 L550 898 M535 925 L552 918 L568 922 M540 940 L556 936"/>
 <path fill="none" stroke="#d9d6cf" stroke-width="0.7" d="M560 850 L585 845 L600 858 L640 850 M575 890 L600 882 L625 888 L640 875 M585 940 L590 905 L610 900 L630 910 M600 800 L620 830 L660 830 M700 850 L730 840 L776 848 M720 800 L745 830 L776 826 M690 960 L705 990 L720 1017 M740 870 L760 900 L776 895 M700 1000 L740 985 L776 990 M560 800 L570 815"/>
 <path fill="none" stroke="#e2b8c0" stroke-width="0.8" d="M686.5 796 L700.6 815.6 L697.4 830.8 L688.7 833 L693 867.7 L682 883 L677.8 898 L673.5 926.4 L669 928.6"/>
 <path fill="none" stroke="#ecb237" stroke-width="2.6" stroke-linejoin="round" stroke-linecap="round" d="M529 861 L526.5 870.7 L521.6 872 L519 889 L515.4 901.7 L519 921.6 L529 936.5 L544 951 L558.8 963.8 L573.7 970.7 L598.5 972.5 L613.4 965 L625.8 951.4 L640.7 936.5 L651.9 925.3 L650.7 904.2 L649.4 886.8 L652 882"/>
 <text x="609" y="830.5" font-family="Liberation Sans" font-size="11" font-weight="700" fill="#8a96a3" text-anchor="middle" letter-spacing="0.8">NORWAY</text>
 <text x="739" y="898.5" font-family="Liberation Sans" font-size="11" font-weight="700" fill="#8a96a3" text-anchor="middle" letter-spacing="0.8">SWEDEN</text>
 <text x="746" y="914" font-family="Liberation Sans" font-size="10" font-weight="700" fill="#3d5677">STOC</text>
 <text x="508.5" y="865.5" font-family="Liberation Sans" font-size="10" font-weight="700" fill="#3f5a7a" text-anchor="middle" stroke="#fff" stroke-width="2" paint-order="stroke">Bergen</text>
 <text x="638.7" y="887" font-family="Liberation Sans" font-size="10" font-weight="700" fill="#3f5a7a" text-anchor="middle" stroke="#fff" stroke-width="2" paint-order="stroke">Oslo</text>
 <text x="477" y="1012" font-family="Liberation Sans" font-size="12" font-weight="700" font-style="italic" fill="#fff" stroke="#a9bcc4" stroke-width="2" paint-order="stroke" text-anchor="middle">North</text>
 <path fill="#505050" d="M529 861 L523 852 A10 10 0 1 1 535 852 Z"/>
 <text x="529.6" y="850.5" font-family="Liberation Sans" font-size="11" fill="#fff" text-anchor="middle">1</text>
 <path fill="#505050" d="M652 882 L646 873 A10 10 0 1 1 658 873 Z"/>
 <text x="652.6" y="873" font-family="Liberation Sans" font-size="11" fill="#fff" text-anchor="middle">2</text>
 </g>
</svg>
<div class="b" style="left:402.7px;top:806.5px;width:33px;height:63px;background:#fff;border:2px solid #a3b3b8;border-radius:4px"></div>
<div class="b" style="left:404.5px;top:837px;width:29.5px;height:1px;background:#d0d0d0"></div>
<div class="b" style="left:412.7px;top:823.7px;width:13px;height:2.6px;background:#111"></div>
<div class="b" style="left:417.9px;top:818.5px;width:2.6px;height:13px;background:#111"></div>
<div class="b" style="left:412.7px;top:853.5px;width:13px;height:2.6px;background:#111"></div>
<div class="b" style="left:402.7px;top:880.2px;width:33px;height:32.5px;background:#fff;border:2px solid #c9c9c9;border-radius:2px"></div>
<svg class="b" style="left:409px;top:887px;" width="20" height="20" viewBox="0 0 20 20"><path fill="none" stroke="#1a1a1a" stroke-width="2.6" stroke-linejoin="round" d="M2.3 6.5V2.3h4.2M13.5 2.3h4.2v4.2M17.7 13.5v4.2h-4.2M6.5 17.7H2.3v-4.2"/></svg>
<div class="b" style="left:792px;top:183px;width:376px;height:442px;background:#f0f5fe;border-radius:4px;box-shadow:inset 0 0 0 1px #eaeff6;"></div>
<div class="b" style="left:792px;top:183px;width:376px;height:48px;background:#e5eefc;border-radius:4px 4px 0 0"></div>
<div class="b" style="left:792px;top:229px;width:188px;height:2px;background:#134ea8"></div>
<div class="t" id="t106" style="left:851.7px;top:197.8px;font-size:16px;line-height:20px;color:#1766d0;font-weight:700;transform-origin:left;">Schedule</div>
<div class="t" id="t107" style="left:1023.6px;top:197.8px;font-size:16px;line-height:20px;color:#454b55;font-weight:700;transform-origin:left;">Edit Schedule</div>
<div class="t" id="t108" style="left:808.5px;top:245.1px;font-size:11.5px;line-height:20px;color:#2a2a2a;transform-origin:left;">Voyage Start Date</div>
<div class="t" id="t109" style="left:970.3px;top:245.1px;font-size:11.5px;line-height:20px;color:#8a8a8a;transform-origin:left;">Lock</div>
<div class="t" id="t110" style="left:1018.2px;top:245.1px;font-size:11.5px;line-height:20px;color:#2a2a2a;transform-origin:left;">Waiting Days</div>
<div class="t" id="t111" style="left:1120px;top:245.1px;font-size:11.5px;line-height:20px;color:#2a2a2a;transform-origin:left;">Lock</div>
<div class="b" style="left:808.5px;top:265.3px;width:153px;height:31.5px;background:#fafafa;border:1px solid #b9b9b9;border-radius:4px;"></div>
<div class="t" id="t112" style="left:815.5px;top:271.2px;font-size:14px;line-height:20px;color:#222;transform-origin:left;">26/05/25 04:47</div>
<svg class="b" style="left:936.25px;top:269.75px;" width="21.5" height="21.5" viewBox="0 0 24 24"><path fill="#6e6e6e" d="M17 12h-5v5h5v-5zM16 1v2H8V1H6v2H5c-1.11 0-1.99.9-1.99 2L3 19c0 1.1.89 2 2 2h14c1.1 0 2-.9 2-2V5c0-1.1-.9-2-2-2h-1V1h-2zm3 18H5V8h14v11z"/></svg>
<div class="b" style="left:973.7px;top:275px;width:16.8px;height:16.6px;background:#b3b3b3;border-radius:2px"></div>
<svg class="b" style="left:973.6px;top:274.8px;" width="17" height="17" viewBox="0 0 24 24"><path fill="#fff" d="M9 16.17L4.83 12l-1.42 1.41L9 19 21 7l-1.41-1.41z"/></svg>
<div class="b" style="left:1018.2px;top:265.4px;width:93.5px;height:31px;background:#fafafa;border:1px solid #b9b9b9;border-radius:4px;"></div>
<div class="t" id="t113" style="right:467.29999999999995px;top:271.0px;font-size:14px;line-height:20px;color:#222;transform-origin:right;">0.00</div>
<div class="b" style="left:1124px;top:275px;width:16.6px;height:16.6px;background:#1060e0;border-radius:2px"></div>
<svg class="b" style="left:1123.8px;top:274.8px;" width="17" height="17" viewBox="0 0 24 24"><path fill="#fff" d="M9 16.17L4.83 12l-1.42 1.41L9 19 21 7l-1.41-1.41z"/></svg>
<div class="b" style="left:812.4px;top:309.2px;width:38.200000000000045px;height:17.19999999999999px;background:#fff;border:1px solid #b8b8b8;border-radius:9px"></div>
<div class="t" id="t114" style="left:531.5px;width:600px;text-align:center;top:307.79999999999995px;font-size:11.5px;line-height:20px;color:#3a3a3a;transform-origin:center;">GMT</div>
<div class="t" id="t115" style="right:610px;top:307.9px;font-size:12px;line-height:20px;color:#222;font-weight:700;transform-origin:right;">26/05/25, 04:47</div>
<div class="b" style="left:980px;top:321px;width:1.3px;height:72px;background:#1b63d3"></div>
<div class="b" style="left:980px;top:408px;width:1.3px;height:111px;background:#b5b5b5"></div>
<div class="b" style="left:972px;top:305.2px;width:16px;height:16px;background:#0f5fdf;border-radius:50%"></div>
<div class="t" id="t116" style="left:680.2px;width:600px;text-align:center;top:303.4px;font-size:11px;line-height:20px;color:#fff;transform-origin:center;">B</div>
<div class="t" id="t117" style="left:998.6px;top:307.9px;font-size:12px;line-height:20px;color:#222;font-weight:700;transform-origin:left;">BERGEN</div>
<div class="t" id="t118" style="left:998.6px;top:326.9px;font-size:12px;line-height:20px;color:#2a2a2a;transform-origin:left;">Ballast</div>
<div class="b" style="left:932.1px;top:370.7px;width:29.899999999999977px;height:17.100000000000023px;background:#fff;border:1px solid #b8b8b8;border-radius:9px"></div>
<div class="t" id="t119" style="left:647.05px;width:600px;text-align:center;top:369.25px;font-size:11.5px;line-height:20px;color:#3a3a3a;transform-origin:center;">0 d</div>
<div class="b" style="left:998.2px;top:370.7px;width:85.39999999999986px;height:17.100000000000023px;background:#fff;border:1px solid #b8b8b8;border-radius:9px"></div>
<div class="t" id="t120" style="left:740.9000000000001px;width:600px;text-align:center;top:369.25px;font-size:11.5px;line-height:20px;color:#3a3a3a;transform-origin:center;">0.00 kn <span style="color:#bbb">|</span> 0 nm</div>
<div class="b" style="left:972px;top:392px;width:16px;height:16px;background:#b9b9b9;border-radius:50%"></div>
<div class="t" id="t121" style="left:680.2px;width:600px;text-align:center;top:390.2px;font-size:11px;line-height:20px;color:#fff;transform-origin:center;">1</div>
<div class="t" id="t122" style="right:610px;top:395.0px;font-size:12px;line-height:20px;color:#222;font-weight:700;transform-origin:right;">ETA 26/05/25, 04:47</div>
<div class="t" id="t123" style="right:610px;top:414.0px;font-size:12px;line-height:20px;color:#222;font-weight:700;transform-origin:right;">ETD 26/05/25, 04:47</div>
<div class="t" id="t124" style="left:998.6px;top:395.0px;font-size:12px;line-height:20px;color:#222;font-weight:700;transform-origin:left;">BERGEN</div>
<div class="t" id="t125" style="left:998.6px;top:413.2px;font-size:12px;line-height:20px;color:#2a2a2a;transform-origin:left;">Loading</div>
<div class="t" id="t126" style="left:998.6px;top:433.6px;font-size:12px;line-height:20px;color:#767676;transform-origin:left;">Port Cost: 0 USD</div>
<div class="t" id="t127" style="left:998.6px;top:452.0px;font-size:12px;line-height:20px;color:#767676;transform-origin:left;">Total Days: 0.00</div>
<svg class="b" style="left:1090.8px;top:454.0px;" width="16" height="16" viewBox="0 0 24 24"><path fill="#767676" d="M11 7h2v2h-2zm0 4h2v6h-2zm1-9C6.48 2 2 6.48 2 12s4.48 10 10 10 10-4.48 10-10S17.52 2 12 2zm0 18c-4.41 0-8-3.59-8-8s3.59-8 8-8 8 3.59 8 8-3.59 8-8 8z"/></svg>
<div class="b" style="left:842.6px;top:496.5px;width:119.19999999999993px;height:17.100000000000023px;background:#fff;border:1px solid #b8b8b8;border-radius:9px"></div>
<div class="t" id="t128" style="left:602.2px;width:600px;text-align:center;top:495.05px;font-size:11.5px;line-height:20px;color:#3a3a3a;transform-origin:center;">1.61 d + 0.16 d Extra</div>
<div class="b" style="left:998px;top:496.5px;width:98.59999999999991px;height:17.100000000000023px;background:#fff;border:1px solid #b8b8b8;border-radius:9px"></div>
<div class="t" id="t129" style="left:747.3px;width:600px;text-align:center;top:495.05px;font-size:11.5px;line-height:20px;color:#3a3a3a;transform-origin:center;">9.09 kn <span style="color:#bbb">|</span> 387 nm</div>
<div class="b" style="left:972px;top:518px;width:16px;height:16px;background:#b9b9b9;border-radius:50%"></div>
<div class="t" id="t130" style="left:680.2px;width:600px;text-align:center;top:516.2px;font-size:11px;line-height:20px;color:#fff;transform-origin:center;">2</div>
<div class="t" id="t131" style="right:610px;top:521.0px;font-size:12px;line-height:20px;color:#222;font-weight:700;transform-origin:right;">ETA 27/05/25, 23:20</div>
<div class="t" id="t132" style="right:610px;top:539.6px;font-size:12px;line-height:20px;color:#222;font-weight:700;transform-origin:right;">ETD 27/05/25, 23:20</div>
<div class="t" id="t133" style="left:998.6px;top:521.0px;font-size:12px;line-height:20px;color:#222;font-weight:700;transform-origin:left;">OSLO</div>
<div class="t" id="t134" style="left:998.6px;top:539.0px;font-size:12px;line-height:20px;color:#2a2a2a;transform-origin:left;">Discharging</div>
<div class="t" id="t135" style="left:998.6px;top:559.7px;font-size:12px;line-height:20px;color:#767676;transform-origin:left;">Port Cost: 0 USD</div>
<div class="t" id="t136" style="left:998.6px;top:577.6px;font-size:12px;line-height:20px;color:#767676;transform-origin:left;">Total Days: 0.00</div>
<svg class="b" style="left:1090.8px;top:579.8px;" width="16" height="16" viewBox="0 0 24 24"><path fill="#767676" d="M11 7h2v2h-2zm0 4h2v6h-2zm1-9C6.48 2 2 6.48 2 12s4.48 10 10 10 10-4.48 10-10S17.52 2 12 2zm0 18c-4.41 0-8-3.59-8-8s3.59-8 8-8 8 3.59 8 8-3.59 8-8 8z"/></svg>
<div class="b" style="left:1184px;top:183px;width:376px;height:829px;background:#f0f5fe;border-radius:4px;box-shadow:inset 0 0 0 1px #eaeff6;"></div>
<div class="t" id="t137" style="left:1200.4px;top:206.2px;font-size:16px;line-height:20px;color:#222;transform-origin:left;">P&amp;L Summary (USD)</div>
<svg class="b" style="left:1375.05px;top:203.35px;" width="24.5" height="24.5" viewBox="0 0 24 24"><path fill="#666" d="M6 20c1.1 0 2-.9 2-2v-7c0-1.1-.9-2-2-2s-2 .9-2 2v7c0 1.1.9 2 2 2zm10-5v3c0 1.1.9 2 2 2s2-.9 2-2v-3c0-1.1-.9-2-2-2s-2 .9-2 2zm-6 3c0 1.1.9 2 2 2s2-.9 2-2V6c0-1.1-.9-2-2-2s-2 .9-2 2v12z"/></svg>
<svg class="b" style="left:1411.2px;top:203.2px;" width="24" height="24" viewBox="0 0 24 24"><path fill="#a9adb3" d="M19.88 18.47c.44-.7.7-1.51.7-2.39 0-2.49-2.01-4.5-4.5-4.5s-4.5 2.01-4.5 4.5 2.01 4.5 4.49 4.5c.88 0 1.7-.26 2.39-.7L21.58 23 23 21.58l-3.12-3.11zm-3.8.11c-1.38 0-2.5-1.12-2.5-2.5s1.12-2.5 2.5-2.5 2.5 1.12 2.5 2.5-1.12 2.5-2.5 2.5zm-.36-8.5c-.74.02-1.45.18-2.1.45l-.55-.83-3.8 6.18-3.01-3.52-3.63 5.81L1 17l5-8 3 3.5L13 6l2.72 4.08zm2.59.5c-.64-.28-1.33-.45-2.05-.49L21.38 2 23 3.18l-4.69 7.4z"/></svg>
<svg class="b" style="left:1530.5px;top:204.2px;" width="22" height="22" viewBox="0 0 24 24"><path fill="#666" d="M12 8l-6 6 1.41 1.41L12 10.83l4.59 4.58L18 14z"/></svg>
<div class="b" style="left:1184px;top:349px;width:376px;height:28px;background:#b4e9cf;border-top:1px solid #aac4b7;border-bottom:1px solid #aac4b7"></div>
<div class="b" style="left:1184px;top:424px;width:376px;height:28px;background:#b4e9cf;border-top:1px solid #aac4b7;border-bottom:1px solid #aac4b7"></div>
<div class="t" id="t138" style="left:1204px;top:256.8px;font-size:12px;line-height:20px;color:#1e1e1e;font-weight:700;transform-origin:left;">Freight</div>
<div class="t" id="t139" style="right:35.700000000000045px;top:256.8px;font-size:12px;line-height:20px;color:#1e1e1e;font-weight:700;transform-origin:right;">1,080,849</div>
<div class="t" id="t140" style="left:1204px;top:280.7px;font-size:12px;line-height:20px;color:#333;transform-origin:left;">Adjustment</div>
<div class="t" id="t141" style="right:35.700000000000045px;top:280.7px;font-size:12px;line-height:20px;color:#333;transform-origin:right;">0</div>
<div class="t" id="t142" style="left:1204px;top:303.9px;font-size:12px;line-height:20px;color:#333;transform-origin:left;">Various</div>
<div class="t" id="t143" style="right:35.700000000000045px;top:303.9px;font-size:12px;line-height:20px;color:#333;transform-origin:right;">0</div>
<div class="t" id="t144" style="left:1204px;top:327.6px;font-size:12px;line-height:20px;color:#333;transform-origin:left;">Demurrage</div>
<div class="t" id="t145" style="right:35.700000000000045px;top:327.6px;font-size:12px;line-height:20px;color:#333;transform-origin:right;">0</div>
<div class="t" id="t146" style="left:1204px;top:351.8px;font-size:12px;line-height:20px;color:#1e1e1e;font-weight:700;transform-origin:left;">Gross Revenue</div>
<div class="t" id="t147" style="right:35.700000000000045px;top:351.8px;font-size:12px;line-height:20px;color:#1e1e1e;font-weight:700;transform-origin:right;">1,080,849</div>
<div class="t" id="t148" style="left:1204px;top:378.8px;font-size:12px;line-height:20px;color:#333;transform-origin:left;">Commission</div>
<div class="t" id="t149" style="right:35.700000000000045px;top:378.8px;font-size:12px;line-height:20px;color:#333;transform-origin:right;">39,991</div>
<div class="t" id="t150" style="left:1204px;top:402.0px;font-size:12px;line-height:20px;color:#333;transform-origin:left;">Despatch</div>
<div class="t" id="t151" style="right:35.700000000000045px;top:402.0px;font-size:12px;line-height:20px;color:#333;transform-origin:right;">0</div>
<div class="t" id="t152" style="left:1204px;top:426.7px;font-size:12px;line-height:20px;color:#1e1e1e;font-weight:700;transform-origin:left;">Net Revenue</div>
<div class="t" id="t153" style="right:35.700000000000045px;top:426.7px;font-size:12px;line-height:20px;color:#1e1e1e;font-weight:700;transform-origin:right;">1,040,858</div>
<div class="t" id="t154" style="left:1204px;top:453.8px;font-size:12px;line-height:20px;color:#333;transform-origin:left;">Port Cost</div>
<div class="t" id="t155" style="right:35.700000000000045px;top:453.8px;font-size:12px;line-height:20px;color:#333;transform-origin:right;">0</div>
<div class="t" id="t156" style="left:1204px;top:476.6px;font-size:12px;line-height:20px;color:#333;transform-origin:left;">Canal Cost</div>
<div class="t" id="t157" style="right:35.700000000000045px;top:476.6px;font-size:12px;line-height:20px;color:#333;transform-origin:right;">0</div>
<div class="t" id="t158" style="left:1204px;top:500.6px;font-size:12px;line-height:20px;color:#333;transform-origin:left;">ILOHC</div>
<div class="t" id="t159" style="right:35.700000000000045px;top:500.6px;font-size:12px;line-height:20px;color:#333;transform-origin:right;">0</div>
<div class="t" id="t160" style="left:1204px;top:523.5px;font-size:12px;line-height:20px;color:#333;transform-origin:left;">Handling Cost</div>
<div class="t" id="t161" style="right:35.700000000000045px;top:523.5px;font-size:12px;line-height:20px;color:#333;transform-origin:right;">0</div>
<div class="t" id="t162" style="left:1206px;top:556.5px;font-size:12px;line-height:20px;color:#333;transform-origin:left;">Various</div>
<div class="b" style="left:1467.6px;top:552.8px;width:67.7px;height:23.4px;background:#fafafa;border:1px solid #b9b9b9;border-radius:4px;"></div>
<div class="t" id="t163" style="right:42.5px;top:554.5px;font-size:14px;line-height:20px;color:#222;transform-origin:right;">0</div>
<div class="t" id="t164" style="left:1204px;top:581.0px;font-size:12px;line-height:20px;color:#333;transform-origin:left;">Freight Cost</div>
<div class="t" id="t165" style="right:35.700000000000045px;top:581.0px;font-size:12px;line-height:20px;color:#333;transform-origin:right;">0</div>
<div class="b" style="left:1200.3px;top:610px;width:343.3px;height:1px;background:#d3d7dc"></div>
<div class="t" id="t166" style="right:195.5px;top:613.0px;font-size:11px;line-height:20px;color:#333;transform-origin:right;">Price (USD)</div>
<div class="t" id="t167" style="right:115.59999999999991px;top:613.0px;font-size:11px;line-height:20px;color:#333;transform-origin:right;">Qty (MT)</div>
<div class="t" id="t168" style="right:35.700000000000045px;top:613.0px;font-size:11px;line-height:20px;color:#333;transform-origin:right;">Cost (USD)</div>
<div class="t" id="t169" style="left:1206px;top:639.0px;font-size:12px;line-height:20px;color:#333;transform-origin:left;">LS MGO</div>
<div class="b" style="left:1286.6px;top:634px;width:90px;height:23.2px;background:#fafafa;border:1px solid #b9b9b9;border-radius:4px;"></div>
<div class="t" id="t170" style="right:202px;top:635.6px;font-size:14px;line-height:20px;color:#222;transform-origin:right;">860.00</div>
<div class="t" id="t171" style="right:115.59999999999991px;top:639.0px;font-size:12px;line-height:20px;color:#333;transform-origin:right;">17.734</div>
<div class="t" id="t172" style="right:35.700000000000045px;top:639.0px;font-size:12px;line-height:20px;color:#333;transform-origin:right;">15,251</div>
<div class="t" id="t173" style="left:1206px;top:672.1px;font-size:12px;line-height:20px;color:#333;transform-origin:left;">BD</div>
<div class="b" style="left:1286.6px;top:667px;width:90px;height:23.2px;background:#fafafa;border:1px solid #b9b9b9;border-radius:4px;"></div>
<div class="t" id="t174" style="right:202px;top:668.6px;font-size:14px;line-height:20px;color:#222;transform-origin:right;">0.00</div>
<div class="t" id="t175" style="right:115.59999999999991px;top:672.1px;font-size:12px;line-height:20px;color:#333;transform-origin:right;">0.000</div>
<div class="t" id="t176" style="right:35.700000000000045px;top:672.1px;font-size:12px;line-height:20px;color:#333;transform-origin:right;">0</div>
<div class="t" id="t177" style="left:1204px;top:703.0px;font-size:12px;line-height:20px;color:#1e1e1e;font-weight:700;transform-origin:left;">Bunker Cost</div>
<div class="t" id="t178" style="right:35.700000000000045px;top:703.0px;font-size:12px;line-height:20px;color:#1e1e1e;font-weight:700;transform-origin:right;">15,251</div>
<div class="b" style="left:1200.7px;top:733px;width:343px;height:1px;background:#d3d7dc"></div>
<div class="t" id="t179" style="left:1206px;top:744.5px;font-size:12px;line-height:20px;color:#333;transform-origin:left;">EU ETS</div>
<div class="b" style="left:1286.6px;top:740.4px;width:90px;height:24px;background:#fafafa;border:1px solid #b9b9b9;border-radius:4px;"></div>
<div class="t" id="t180" style="right:232.5px;top:741.8px;font-size:14px;line-height:20px;color:#222;transform-origin:right;">700.00</div>
<div class="t" id="t181" style="right:202px;top:741.8px;font-size:14px;line-height:20px;color:#6a6a6a;transform-origin:right;">EUR</div>
<div class="t" id="t182" style="right:115.59999999999991px;top:744.5px;font-size:12px;line-height:20px;color:#333;transform-origin:right;">39.798</div>
<div class="t" id="t183" style="right:35.700000000000045px;top:744.5px;font-size:12px;line-height:20px;color:#333;transform-origin:right;">31,806</div>
<div class="t" id="t184" style="left:1206px;top:777.8px;font-size:12px;line-height:20px;color:#333;transform-origin:left;">Fuel EU</div>
<div class="b" style="left:1286.6px;top:773.4px;width:90px;height:24px;background:#fafafa;border:1px solid #b9b9b9;border-radius:4px;"></div>
<div class="t" id="t185" style="left:1292.6px;top:775.0px;font-size:14px;line-height:20px;color:#222;transform-origin:left;">2,400...</div>
<div class="t" id="t186" style="right:202px;top:775.0px;font-size:14px;line-height:20px;color:#6a6a6a;transform-origin:right;">EUR</div>
<div class="t" id="t187" style="right:115.59999999999991px;top:777.8px;font-size:12px;line-height:20px;color:#333;transform-origin:right;">0.263</div>
<div class="t" id="t188" style="right:35.700000000000045px;top:777.8px;font-size:12px;line-height:20px;color:#333;transform-origin:right;">721</div>
<div class="b" style="left:1184px;top:804px;width:376px;height:65px;background:#b4e9cf;border-top:1px solid #aac4b7;border-bottom:1px solid #aac4b7"></div>
<div class="t" id="t189" style="left:1204.2px;top:831.5px;font-size:12px;line-height:20px;color:#1e1e1e;font-weight:700;transform-origin:left;">TCE</div>
<div class="b" style="left:1259.7px;top:827.5px;width:119.7px;height:24px;background:#fafafa;border:1px solid #b9b9b9;border-radius:4px;"></div>
<div class="t" id="t190" style="right:199px;top:829.5px;font-size:14px;line-height:20px;color:#222;transform-origin:right;">560,000</div>
<div class="t" id="t191" style="left:1387.6px;top:807.0px;font-size:11.5px;line-height:20px;color:#333;transform-origin:left;">Lock</div>
<div class="b" style="left:1391.7px;top:833.3px;width:16.9px;height:16.9px;background:#1060e0;border-radius:2px"></div>
<svg class="b" style="left:1391.6px;top:833.2px;" width="17" height="17" viewBox="0 0 24 24"><path fill="#fff" d="M9 16.17L4.83 12l-1.42 1.41L9 19 21 7l-1.41-1.41z"/></svg>
<div class="t" id="t192" style="right:35.700000000000045px;top:811.0px;font-size:11.5px;line-height:20px;color:#1e1e1e;font-weight:700;transform-origin:right;">Contribution</div>
<div class="t" id="t193" style="right:35.700000000000045px;top:831.5px;font-size:12px;line-height:20px;color:#1e1e1e;font-weight:700;transform-origin:right;">993,080</div>
<div class="t" id="t194" style="left:1204px;top:870.6px;font-size:12px;line-height:20px;color:#333;transform-origin:left;">Hire Payable</div>
<div class="t" id="t195" style="right:35.700000000000045px;top:870.6px;font-size:12px;line-height:20px;color:#333;transform-origin:right;">0</div>
<div class="t" id="t196" style="left:1204px;top:893.4px;font-size:12px;line-height:20px;color:#333;transform-origin:left;">Ballast Bonus</div>
<div class="t" id="t197" style="right:35.700000000000045px;top:893.4px;font-size:12px;line-height:20px;color:#333;transform-origin:right;">0</div>
<div class="t" id="t198" style="left:1204px;top:917.4px;font-size:12px;line-height:20px;color:#333;transform-origin:left;">CVE</div>
<div class="t" id="t199" style="right:35.700000000000045px;top:917.4px;font-size:12px;line-height:20px;color:#333;transform-origin:right;">0</div>
<div class="b" style="left:1184px;top:939px;width:376px;height:57px;background:#b4e9cf;border-top:1px solid #aac4b7;border-bottom:1px solid #aac4b7"></div>
<div class="t" id="t200" style="right:35.700000000000045px;top:942.2px;font-size:11.5px;line-height:20px;color:#1e1e1e;font-weight:700;transform-origin:right;">Result</div>
<div class="t" id="t201" style="left:1204.2px;top:967.6px;font-size:12px;line-height:20px;color:#1e1e1e;font-weight:700;transform-origin:left;">Result / Day</div>
<div class="t" id="t202" style="left:1320.4px;top:967.6px;font-size:12px;line-height:20px;color:#1e1e1e;font-weight:700;transform-origin:left;">560,000</div>
<div class="b" style="left:1436.4px;top:962.4px;width:99.3px;height:24px;background:#fafafa;border:1px solid #b9b9b9;border-radius:4px;"></div>
<div class="t" id="t203" style="right:42.5px;top:964.4px;font-size:14px;line-height:20px;color:#222;transform-origin:right;">993,080</div>
</body></html>
